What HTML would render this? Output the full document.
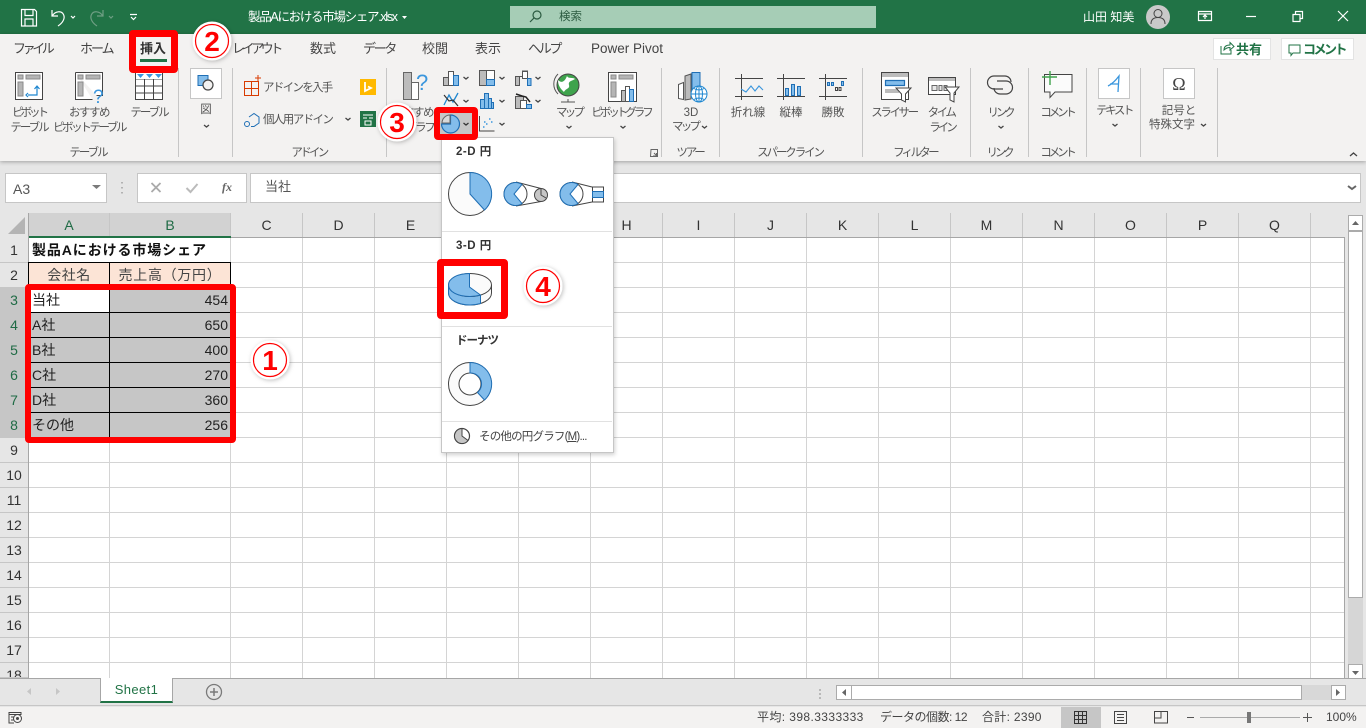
<!DOCTYPE html>
<html lang="ja"><head><meta charset="utf-8"><title>製品Aにおける市場シェア</title>
<style>
html,body{margin:0;padding:0;width:1366px;height:728px;overflow:hidden;background:#e6e6e6}
body{position:relative;font-family:"Liberation Sans","Noto Sans CJK JP",sans-serif;font-size:12px;color:#444}
div,span.t{position:absolute;box-sizing:border-box}
.t{position:absolute;white-space:nowrap;line-height:16px;height:16px;margin-top:-8px;color:#444}
.c{transform:translateX(-50%)}
.w{color:#fff}
.g{font-size:11.5px;color:#555;letter-spacing:-2.4px}
.k{letter-spacing:0}
.tab{font-size:13px}
.sep{width:1px;background:#c6c6c6;top:68px;height:89px}
.b{background:#fff;border:1px solid #c6c6c6}
.rh{left:0;width:28px;text-align:center;font-size:14px;line-height:25px;height:25px;color:#333;border-bottom:1px solid #c6c6c6;background:#e6e6e6}
.rs{background:#c6c6c6;color:#1f6b45}
.ch{top:213px;height:24px;text-align:center;font-size:14px;line-height:24px;color:#333;border-right:1px solid #c6c6c6}
.cell{height:25px;line-height:24px;font-size:14px;color:#222;white-space:nowrap;border-right:1px solid #000;border-bottom:1px solid #000;overflow:hidden}
.red{border:6px solid #f00;border-radius:4px;background:transparent}
svg{position:absolute;overflow:visible}
</style></head><body>

<!-- title bar -->
<div style="left:0;top:0;width:1366px;height:34px;background:#217346"></div>
<div style="left:510px;top:6px;width:366px;height:22px;background:#a6cdb6"></div>
<span class="t" style="left:559px;top:17px;color:#2b5a40;font-size:11.5px">検索</span>
<span class="t w" style="left:248px;top:17px;font-size:12.500px;letter-spacing:-1.300px">製品Aにおける市場シェア.xlsx</span>
<span class="t w" style="left:1083px;top:17px;font-size:12px">山田 知美</span>

<!-- ribbon -->
<div style="left:0;top:34px;width:1366px;height:127px;background:#f3f2f1;box-shadow:0 1px 4px rgba(0,0,0,.3)"></div>
<span class="t tab" style="left:13px;top:49px;letter-spacing:-3.400px">ファイル</span>
<span class="t tab" style="left:80px;top:49px;letter-spacing:-2px">ホーム</span>
<span class="t tab" style="left:140px;top:49px;font-weight:bold;color:#333">挿入</span>
<span class="t tab" style="left:232px;top:49px;letter-spacing:-3.400px">レイアウト</span>
<span class="t tab" style="left:310px;top:49px">数式</span>
<span class="t tab" style="left:363px;top:49px;letter-spacing:-2.300px">データ</span>
<span class="t tab" style="left:422px;top:49px">校閲</span>
<span class="t tab" style="left:475px;top:49px">表示</span>
<span class="t tab" style="left:528px;top:49px;letter-spacing:-2.300px">ヘルプ</span>
<span class="t" style="left:591px;top:49px;font-size:13.500px">Power Pivot</span>
<div style="left:140px;top:59px;width:27px;height:3px;background:#217346"></div>

<div class="b" style="left:1213px;top:38px;width:58px;height:22px;border-color:#e3e3e3"></div>
<span class="t" style="left:1236px;top:50px;font-size:13px;font-weight:bold;color:#217346">共有</span>
<div class="b" style="left:1281px;top:38px;width:73px;height:22px;border-color:#e3e3e3"></div>
<span class="t" style="left:1303px;top:50px;font-size:13px;letter-spacing:-2.500px;font-weight:bold;color:#217346">コメント</span>

<div class="sep" style="left:178px"></div><div class="sep" style="left:232px"></div><div class="sep" style="left:386px"></div>
<div class="sep" style="left:661px"></div><div class="sep" style="left:719px"></div><div class="sep" style="left:862px"></div>
<div class="sep" style="left:970px"></div><div class="sep" style="left:1028px"></div><div class="sep" style="left:1086px"></div>
<div class="sep" style="left:1140px"></div><div class="sep" style="left:1217px"></div>

<div class="b" style="left:190px;top:68px;width:32px;height:31px"></div>
<div class="b" style="left:1098px;top:68px;width:32px;height:31px"></div>
<div class="b" style="left:1163px;top:68px;width:32px;height:31px"></div>

<span class="t c g" style="left:29px;top:113px;letter-spacing:-3px">ピボット</span>
<span class="t c g" style="left:29px;top:128px;letter-spacing:-2px">テーブル</span>
<span class="t c g" style="left:89px;top:113px;letter-spacing:-1.500px">おすすめ</span>
<span class="t c g" style="left:89px;top:128px">ピボットテーブル</span>
<span class="t c g" style="left:149px;top:113px;letter-spacing:-2px">テーブル</span>
<span class="t c g" style="left:88px;top:153px;letter-spacing:-2px">テーブル</span>
<span class="t c g k" style="left:206px;top:110px">図</span>
<span class="t g" style="left:263px;top:88px;letter-spacing:-1.700px">アドインを入手</span>
<span class="t g" style="left:263px;top:120px;letter-spacing:-1.600px">個人用アドイン</span>
<span class="t c g" style="left:309px;top:153px;letter-spacing:-2.700px">アドイン</span>
<span class="t g" style="left:393px;top:113px;letter-spacing:-1.500px">おすすめ</span>
<span class="t g" style="left:406px;top:128px">グラフ</span>
<span class="t c g" style="left:569px;top:113px;letter-spacing:-2.800px">マップ</span>
<span class="t c g" style="left:621px;top:113px;letter-spacing:-3px">ピボットグラフ</span>
<span class="t c g k" style="left:691px;top:113px">3D</span>
<span class="t g" style="left:672px;top:127px;letter-spacing:-2.800px">マップ</span>
<span class="t c g" style="left:690px;top:153px;letter-spacing:-2.200px">ツアー</span>
<span class="t c g k" style="left:748px;top:113px">折れ線</span>
<span class="t c g k" style="left:791px;top:113px">縦棒</span>
<span class="t c g k" style="left:833px;top:113px">勝敗</span>
<span class="t c g" style="left:790px;top:153px;letter-spacing:-2.100px">スパークライン</span>
<span class="t c g" style="left:894px;top:113px">スライサー</span>
<span class="t c g" style="left:941px;top:113px;letter-spacing:-2.500px">タイム</span>
<span class="t c g" style="left:942px;top:128px;letter-spacing:-3px">ライン</span>
<span class="t c g" style="left:915px;top:153px;letter-spacing:-2.700px">フィルター</span>
<span class="t c g" style="left:1000px;top:113px;letter-spacing:-3.200px">リンク</span>
<span class="t c g" style="left:999px;top:153px;letter-spacing:-3.200px">リンク</span>
<span class="t c g" style="left:1057px;top:113px;letter-spacing:-3.200px">コメント</span>
<span class="t c g" style="left:1057px;top:153px;letter-spacing:-3.200px">コメント</span>
<span class="t c g" style="left:1114px;top:111px;letter-spacing:-2.500px">テキスト</span>
<span class="t c g k" style="left:1179px;top:111px">記号と</span>
<span class="t g k" style="left:1149px;top:125px">特殊文字</span>

<!-- formula bar -->
<div class="b" style="left:5px;top:173px;width:102px;height:30px"></div>
<span class="t" style="left:13px;top:189px;font-size:14px;color:#555">A3</span>
<div class="b" style="left:137px;top:173px;width:110px;height:30px"></div>
<div class="b" style="left:250px;top:173px;width:1111px;height:30px"></div>
<span class="t" style="left:265px;top:187px;font-size:13px;color:#555">当社</span>

<!-- grid -->
<div style="left:29px;top:238px;width:1316px;height:440px;background-color:#fff;background-image:linear-gradient(to bottom,transparent 24px,#d4d4d4 24px);background-size:100% 25px"></div>
<div style="left:230px;top:238px;width:1114px;height:440px;background-image:linear-gradient(to right,#d4d4d4 1px,transparent 1px);background-size:72px 100%"></div>
<div style="left:109px;top:438px;width:1px;height:240px;background:#d4d4d4"></div>
<div style="left:28px;top:213px;width:1px;height:465px;background:#a6a6a6"></div>
<div style="left:1344px;top:237px;width:1px;height:441px;background:#a6a6a6"></div>
<div style="left:29px;top:237px;width:1316px;height:1px;background:#a6a6a6"></div>

<!-- headers -->
<div style="left:0;top:213px;width:28px;height:25px;background:#e6e6e6"></div>
<div class="ch" style="left:29px;width:81px;background:#d2d2d2;color:#1f6b45">A</div>
<div class="ch" style="left:110px;width:121px;background:#d2d2d2;color:#1f6b45">B</div>
<div style="left:29px;top:236px;width:202px;height:2px;background:#217346"></div>
<div class="ch" style="left:231px;width:72px">C</div><div class="ch" style="left:303px;width:72px">D</div>
<div class="ch" style="left:375px;width:72px">E</div><div class="ch" style="left:447px;width:72px">F</div>
<div class="ch" style="left:519px;width:72px">G</div><div class="ch" style="left:591px;width:72px">H</div>
<div class="ch" style="left:663px;width:72px">I</div><div class="ch" style="left:735px;width:72px">J</div>
<div class="ch" style="left:807px;width:72px">K</div><div class="ch" style="left:879px;width:72px">L</div>
<div class="ch" style="left:951px;width:72px">M</div><div class="ch" style="left:1023px;width:72px">N</div>
<div class="ch" style="left:1095px;width:72px">O</div><div class="ch" style="left:1167px;width:72px">P</div>
<div class="ch" style="left:1239px;width:72px">Q</div>

<div class="rh" style="top:238px">1</div><div class="rh" style="top:263px">2</div>
<div class="rh rs" style="top:288px">3</div><div class="rh rs" style="top:313px">4</div>
<div class="rh rs" style="top:338px">5</div><div class="rh rs" style="top:363px">6</div>
<div class="rh rs" style="top:388px">7</div><div class="rh rs" style="top:413px">8</div>
<div class="rh" style="top:438px">9</div><div class="rh" style="top:463px">10</div>
<div class="rh" style="top:488px">11</div><div class="rh" style="top:513px">12</div>
<div class="rh" style="top:538px">13</div><div class="rh" style="top:563px">14</div>
<div class="rh" style="top:588px">15</div><div class="rh" style="top:613px">16</div>
<div class="rh" style="top:638px">17</div><div class="rh" style="top:663px;height:15px;line-height:25px;overflow:hidden">18</div>

<!-- cells -->
<div style="left:29px;top:238px;width:201px;height:24px;padding-left:3px;background:#fff;line-height:24px;font-size:14px;font-weight:bold;color:#111;white-space:nowrap;letter-spacing:.9px">製品Aにおける市場シェア</div>
<div class="cell" style="left:28px;top:262px;width:82px;height:26px;background:#fce4d6;text-align:center;border-top:1px solid #000;border-left:1px solid #000;color:#444;letter-spacing:.5px">会社名</div>
<div class="cell" style="left:110px;top:262px;width:121px;height:26px;background:#fce4d6;text-align:center;border-top:1px solid #000;color:#444;letter-spacing:.7px">売上高（万円）</div>
<div class="cell" style="left:29px;top:288px;width:81px;background:#fff;padding-left:3px">当社</div>
<div class="cell" style="left:110px;top:288px;width:121px;background:#c6c6c6;text-align:right;padding-right:2px">454</div>
<div class="cell" style="left:29px;top:313px;width:81px;background:#c6c6c6;padding-left:3px">A社</div>
<div class="cell" style="left:110px;top:313px;width:121px;background:#c6c6c6;text-align:right;padding-right:2px">650</div>
<div class="cell" style="left:29px;top:338px;width:81px;background:#c6c6c6;padding-left:3px">B社</div>
<div class="cell" style="left:110px;top:338px;width:121px;background:#c6c6c6;text-align:right;padding-right:2px">400</div>
<div class="cell" style="left:29px;top:363px;width:81px;background:#c6c6c6;padding-left:3px">C社</div>
<div class="cell" style="left:110px;top:363px;width:121px;background:#c6c6c6;text-align:right;padding-right:2px">270</div>
<div class="cell" style="left:29px;top:388px;width:81px;background:#c6c6c6;padding-left:3px">D社</div>
<div class="cell" style="left:110px;top:388px;width:121px;background:#c6c6c6;text-align:right;padding-right:2px">360</div>
<div class="cell" style="left:29px;top:413px;width:81px;background:#c6c6c6;padding-left:3px">その他</div>
<div class="cell" style="left:110px;top:413px;width:121px;background:#c6c6c6;text-align:right;padding-right:2px">256</div>

<!-- vertical scrollbar -->
<div style="left:1348px;top:231px;width:15px;height:433px;background:#d6d6d6"></div>
<div class="b" style="left:1348px;top:215px;width:15px;height:16px;border-color:#ababab"></div>
<div class="b" style="left:1348px;top:231px;width:15px;height:367px;border-color:#ababab"></div>
<div class="b" style="left:1348px;top:664px;width:15px;height:15px;border-color:#ababab"></div>

<!-- tab bar -->
<div style="left:0;top:678px;width:1366px;height:28px;background:#e6e6e6;border-top:1px solid #a6a6a6;border-bottom:1px solid #c6c6c6"></div>
<div style="left:100px;top:678px;width:73px;height:25px;background:#fff;border-left:1px solid #a6a6a6;border-right:1px solid #a6a6a6;border-bottom:2px solid #217346;text-align:center;line-height:23px;font-size:13px;letter-spacing:.4px;color:#217346">Sheet1</div>
<div style="left:851px;top:685px;width:480px;height:15px;background:#d8d8d8"></div>
<div class="b" style="left:836px;top:685px;width:16px;height:15px;border-color:#ababab"></div>
<div class="b" style="left:851px;top:685px;width:451px;height:15px;border-color:#ababab"></div>
<div class="b" style="left:1331px;top:685px;width:15px;height:15px;border-color:#ababab"></div>

<!-- status bar -->
<div style="left:0;top:707px;width:1366px;height:21px;background:#f3f2f1"></div>
<div style="left:1061px;top:707px;width:40px;height:21px;background:#c6c6c6"></div>
<span class="t" style="left:757px;top:717px;letter-spacing:.4px">平均: 398.3333333</span>
<span class="t" style="left:880px;top:717px;letter-spacing:-.5px">データの個数: 12</span>
<span class="t" style="left:982px;top:717px;letter-spacing:.3px">合計: 2390</span>
<span class="t" style="left:1326px;top:717px">100%</span>

<!-- icons -->
<svg style="left:0;top:0" width="1366" height="728" viewBox="0 0 1366 728" fill="none">
 <!-- title bar -->
 <g stroke="#fff" stroke-width="1.2">
  <path d="M21.5 9.5h13l2 2v14.500h-15zM25 9.5v6h8v-6M25 26v-7h8v7"/>
  <path d="M52 10v6h6M52.500 15.500c3-4.500 9-5 11-1s-1 8.500-5.500 11.500"/>
  <path d="M71 16l2 2 2-2M131 17l2.500 2.500 2.500-2.500M130 14.500h7"/>
  <path d="M1198.500 11.500h13v9h-13zM1198.500 14h13M1205 19v-4M1203 17l2-2 2 2"/>
  <path d="M1246 16.500h10"/>
  <path d="M1293 14.500h7v7h-7zM1295.500 14v-2.500h7v7h-2.500"/>
  <path d="M1338 11l10 10M1348 11l-10 10"/>
  <path d="M402 16l5 0-2.500 3z" fill="#fff" stroke="none"/>
 </g>
 <g stroke="#6f9f84" stroke-width="1.2">
  <path d="M103 10v6h-6M102.500 15.500c-3-4.500-9-5-11-1s1 8.500 5.500 11.500M109 16l2 2 2-2"/>
 </g>
 <circle cx="537" cy="15" r="4" stroke="#2b5a40" stroke-width="1.2"/><path d="M534 18l-4 4" stroke="#2b5a40" stroke-width="1.2"/>
 <circle cx="1158" cy="17" r="12" fill="#c9c9c9"/>
 <circle cx="1158" cy="13.500" r="4" stroke="#444"/><path d="M1151 24c0-5 3-6.500 7-6.500s7 1.500 7 6.500" stroke="#444"/>

 <!-- share/comment -->
 <path d="M1221 46v8h10v-4M1224 50c0-4 3-5 6-5v-2.500l4 4-4 3.500v-2.500c-2 0-4 .5-6 2.500z" stroke="#217346"/>
 <path d="M1289 45h11v8h-7l-2 2.500v-2.500h-2z" stroke="#217346"/>

 <!-- pivot -->
 <path d="M15.500 72.500h27v27h-27z" fill="#fff" stroke="#444"/>
 <path d="M18 75h5v4h-5zM26 75h14v4h-14zM18 82h5v14h-5z" fill="#b5b5b5" stroke="#8a8a8a"/>
 <path d="M28 95h9v-8M34.500 89l2.500-3 2.500 3M28 93l-2 2 2 2" stroke="#1f87d0" stroke-width="1.2"/>
 <!-- recommended pivot -->
 <path d="M75.500 72.500h27v23h-6M75.500 72.500v27h17" fill="#fff" stroke="#444"/>
 <path d="M78 75h5v4h-5zM86 75h14v4h-14zM78 82h5v14h-5z" fill="#b5b5b5" stroke="#8a8a8a"/>
 <text x="93" y="103" font-family="Liberation Sans,sans-serif" font-size="19" fill="#3a96dd">?</text>
 <!-- table -->
 <path d="M135.500 72.500h27v27h-27zM135.500 79h27M135.500 86h27M135.500 93h27M144.500 72.500v27M153.500 72.500v27" fill="#fff" stroke="#444"/>
 <path d="M136 73h26v6h-26z" fill="#fff"/>
 <path d="M137 74h7l-3.500 4zM146 74h7l-3.500 4zM155 74h7l-3.500 4z" fill="#3a96dd"/>
 <!-- pictures -->
 <path d="M198 75.500h10v10h-10z" fill="#83bdeb" stroke="#1f6fb5"/>
 <circle cx="208" cy="85" r="5" fill="#f3f2f1" stroke="#444" stroke-width="1.200"/>
 <!-- chevrons -->
 <g stroke="#444" stroke-width="1.300">
  <path d="M204 125l2.500 2 2.500-2M345.500 118l2.500 2 2.500-2M463.500 77l2.500 2 2.500-2M499.500 77l2.500 2 2.500-2M535.500 77l2.500 2 2.500-2M463.500 100l2.500 2 2.500-2M499.500 100l2.500 2 2.500-2M535.500 100l2.500 2 2.500-2M499.500 123l2.500 2 2.500-2M566.500 126l2.500 2 2.500-2M620.500 126l2.500 2 2.500-2M702 126l2.500 2 2.500-2M998.500 126l2.500 2 2.500-2M1112.500 124l2.500 2 2.500-2M1201 124l2.500 2 2.500-2M1350 156l3.500-3 3.500 3"/>
 </g>
 <!-- add-ins -->
 <path d="M244.500 81.500h14v14h-14zM251.500 81.500v14M244.500 88.500h14" stroke="#d83b01"/>
 <path d="M255 78h6M258 75v6" stroke="#d83b01"/>
 <path d="M360 79h16v16h-16z" fill="#ffb900"/><path d="M365 82v9l6-3-3-1.500" stroke="#fff" stroke-width="1.800"/>
 <path d="M249 117l5-3.500 5 3.500v6l-5 3.500h-3" stroke="#1f6fb5"/><circle cx="247" cy="124" r="2.500" stroke="#1f6fb5"/>
 <path d="M360 111h16v16h-16z" fill="#217346"/><path d="M363 115h10M363 118h4M369 118h4M365 125h6v-4h-6z" stroke="#fff"/>
 <!-- recommended chart -->
 <path d="M403.500 72.500h8v27h-8z" fill="#bcbcbc" stroke="#666"/><path d="M411.500 82.500h7v17h-7z" fill="#fff" stroke="#666"/>
 <text x="416" y="90" font-family="Liberation Sans,sans-serif" font-size="22" fill="#3a96dd">?</text>
 <!-- small charts -->
 <path d="M443.500 77.500h5v8h-5z" fill="#bcbcbc" stroke="#555"/><path d="M448.500 71.500h5v14h-5z" fill="#fff" stroke="#555"/><path d="M453.500 75.500h5v10h-5z" fill="#83bdeb" stroke="#1f6fb5"/>
 <path d="M479.500 70.500h15v15h-15z" fill="#fff" stroke="#555"/><path d="M479.500 70.500h7v15h-7z" fill="#bcbcbc" stroke="#555"/><path d="M486.500 79.500h8v6h-8z" fill="#83bdeb" stroke="#1f6fb5"/>
 <path d="M515.500 85.500h4v-9h-4zM519.500 76.500h3v-5.500h5v7" fill="#bcbcbc" stroke="#555"/><path d="M522.500 71.500h5v7h-5z" fill="#fff" stroke="#555"/><path d="M527.500 78.500h3.500v7h-3.500z" fill="#83bdeb" stroke="#1f6fb5"/>
 <path d="M444 105l5-10 4 7 5-9" stroke="#1f87d0" stroke-width="1.300"/><path d="M444 95l5 6 4-1 5 6" stroke="#333" stroke-width="1.200"/>
 <path d="M480.500 108.500v-9h4v9zM484.500 108.500v-15h4v15zM488.500 108.500v-10h3v10zM491.500 108.500v-6h2v6z" fill="#83bdeb" stroke="#1f6fb5"/>
 <path d="M515.500 96.500h8v12h-8z" fill="#bcbcbc" stroke="#555"/><path d="M520.500 100.500h6v8h-6z" fill="#fff" stroke="#555"/><path d="M526.500 104.500h5v4h-5z" fill="#83bdeb" stroke="#1f6fb5"/>
 <path d="M516 94l6 2 4 1 4 5" stroke="#222" stroke-width="1.500"/>
 <path d="M479.500 116v15h15" stroke="#444"/><path d="M483 127h1.500M486 124h1.500M489 119h1.500M491 122h1.500M484 122h1.500" stroke="#3a96dd" stroke-width="1.500"/>
 <!-- map -->
 <circle cx="568" cy="85" r="11" fill="#3fa34d" stroke="#444"/><path d="M558 80c4 4 7 1 9-4 1 3 6 1 8 3-3 2-7 2-6 6s-3 3-5 7c-3-3-6-6-6-12z" fill="#fff"/>
 <path d="M558 74a14 14 0 0 0 0 20M568 99v3M561 102h14" stroke="#555"/>
 <!-- pivot chart -->
 <path d="M608.500 72.500h28v29h-28z" fill="#fff" stroke="#444"/>
 <path d="M611 75h5v4h-5zM619 75h14v4h-14zM611 82h5v15h-5z" fill="#b5b5b5" stroke="#8a8a8a"/>
 <path d="M621.500 90.500h4v11h-4z" fill="#bcbcbc" stroke="#555"/><path d="M625.500 86.500h4v15h-4z" fill="#fff" stroke="#555"/><path d="M629.500 89.500h4v12h-4z" fill="#83bdeb" stroke="#1f6fb5"/>
 <path d="M651 149.500h6.500v7h-7zM654 153l3 3M656 156h-3M656.500 156v-3" stroke="#666"/>
 <!-- 3d map -->
 <path d="M678.500 84.500l5-2v17l-5-1z" fill="#fff" stroke="#555"/><path d="M685 76l6-2v25l-6 1z" fill="#bcbcbc" stroke="#555"/>
 <path d="M692 72.500h8v18h-8z" fill="#83bdeb" stroke="#1f6fb5"/>
 <circle cx="699" cy="94" r="8" fill="#fff" stroke="#1f87d0"/><path d="M691 94h16M699 86v16M694 88.500c3 2 7 2 10 0M694 99.500c3-2 7-2 10 0" stroke="#1f87d0"/><ellipse cx="699" cy="94" rx="3.500" ry="8" stroke="#1f87d0"/>
 <!-- sparklines -->
 <g stroke="#444"><path d="M735 78.500h28M735 96.500h28M741.500 74v26M777 78.500h28M777 96.500h28M783.500 74v26M819 78.500h28M819 96.500h28M825.500 74v26"/></g>
 <path d="M741 89l5 3 5-6 4 5 4-5 4 4" stroke="#3a96dd" stroke-width="1.100"/>
 <path d="M785.500 88.500h3v7h-3zM791.500 84.500h3v11h-3zM797.500 86.500h3v9h-3z" fill="#83bdeb" stroke="#1f6fb5"/>
 <path d="M827.500 82.500h2v3h-2zM831.500 82.500h2v3h-2zM841.500 81.500h2v4h-2z" fill="#83bdeb" stroke="#1f6fb5"/><path d="M835.500 87.500h2v3h-2zM839 87.500h2v3h-2z" stroke="#444"/>
 <!-- slicer -->
 <path d="M881.500 72.500h27v27h-27z" fill="#fff" stroke="#444"/><path d="M882 73h26v4h-26z" fill="#bcbcbc"/>
 <path d="M885.500 80.500h19v5h-19z" fill="#83bdeb" stroke="#1f6fb5" stroke-width="1.200"/><path d="M885 89h14v4h-14z" fill="#bcbcbc"/>
 <path d="M896 88h15l-5.500 6v8l-4-2v-6z" fill="#fff" stroke="#444"/>
 <!-- timeline -->
 <path d="M928.500 77.500h27v17h-27z" fill="#fff" stroke="#444"/><path d="M929 78h26v3h-26z" fill="#bcbcbc"/>
 <path d="M932 85.500h5v5h-5zM939 85.500h3v5h-3zM944 85.500h3v5h-3z" fill="#e8e8e8" stroke="#666"/>
 <path d="M945 87h14l-5 6v9l-4-2v-7z" fill="#fff" stroke="#444"/>
 <!-- link -->
 <g stroke="#444" stroke-width="1.200"><path d="M1003 89h-9a6.500 6.500 0 0 1 0-13h11c3 0 6 2.500 6 6"/><path d="M997 81h9a6.500 6.500 0 0 1 0 13h-6c-3 0-6-2.500-6-6"/></g>
 <!-- comment -->
 <path d="M1044.500 74.500h27.500v17.500h-17l-5 5.500v-5.500h-5.500z" fill="#fbfbfb" stroke="#444"/>
 <path d="M1042 77h15M1050 71v14" stroke="#3fa34d" stroke-width="1.400"/>
 <!-- text, omega -->
 <path d="M1108 86c4-2 8-6 11-10l-1 16M1110 84c3 0 6 0 8 0" stroke="#3a96dd" stroke-width="1.300"/>
 <text x="1179" y="90" text-anchor="middle" font-family="Liberation Serif,serif" font-size="18" fill="#444">Ω</text>

 <!-- formula bar -->
 <path d="M92 185h9l-4.500 4z" fill="#7a7a7a"/>
 <path d="M122 182v1.500M122 187v1.500M122 192v1.500" stroke="#a0a0a0" stroke-width="1.500"/>
 <path d="M151.500 183l9 9M160.500 183l-9 9" stroke="#aaa" stroke-width="1.800"/>
 <path d="M186.500 188l4 4 7-8" stroke="#bbb" stroke-width="2"/>
 <text x="222" y="191" font-family="Liberation Serif,serif" font-style="italic" font-weight="bold" font-size="12" fill="#666">fx</text>
 <path d="M1348 186l4 3 4-3" stroke="#666" stroke-width="2"/>

 <!-- corner & scroll arrows -->
 <path d="M25 217v17h-17z" fill="#b4b4b4"/>
 <path d="M1352 225l3.500-4 3.500 4z" fill="#666"/><path d="M1352 671l3.500 4 3.500-4z" fill="#666"/>
 <path d="M846 689v7l-4-3.500zM1336 689v7l4-3.500z" fill="#666"/>
 <path d="M31 688v7l-4-3.500z" fill="#c6c6c6"/><path d="M56 688v7l4-3.500z" fill="#c6c6c6"/>
 <circle cx="214" cy="692" r="7.500" stroke="#7a7a7a" stroke-width="1.300"/><path d="M210 692h8M214 688v8" stroke="#7a7a7a" stroke-width="1.500"/>
 <path d="M820 689v2M820 693v2M820 697v2" stroke="#aaa" stroke-width="1.500"/>

 <!-- status icons -->
 <path d="M9 712.500h12v2h-12zM9 714v9h5M11 717h4M11 720h3" stroke="#444"/><circle cx="17.500" cy="718.500" r="4" fill="#f3f2f1" stroke="#444"/><circle cx="17.500" cy="718.500" r="1.500" fill="#444"/>
 <path d="M1074.500 711.500h12v12h-12zM1078.500 711.500v12M1082.500 711.500v12M1074.500 715.500h12M1074.500 719.500h12" stroke="#333"/>
 <path d="M1114.500 711.500h12v12h-12zM1117 714.500h7M1117 717.500h7M1117 720.500h7" stroke="#444"/>
 <path d="M1154.500 711v12h13v-12M1154.500 711.500h13M1161 711v7h-6.500" stroke="#444"/>
 <path d="M1187 717.500h7M1303 717.500h9M1307.500 713v9" stroke="#555"/>
 <path d="M1200 717.500h100" stroke="#aaa"/><path d="M1247 712h4v11h-4z" fill="#777"/>
</svg>

<!-- dropdown -->
<div style="left:441px;top:137px;width:173px;height:316px;background:#fff;border:1px solid #c6c6c6;box-shadow:1px 2px 4px rgba(0,0,0,.18)"></div>
<div style="left:442px;top:231px;width:170px;height:1px;background:#e1e1e1"></div>
<div style="left:442px;top:326px;width:170px;height:1px;background:#e1e1e1"></div>
<div style="left:442px;top:421px;width:170px;height:1px;background:#e1e1e1"></div>
<span class="t" style="left:456px;top:152px;font-weight:bold;font-size:11.500px;color:#333;letter-spacing:.5px">2-D 円</span>
<span class="t" style="left:456px;top:246px;font-weight:bold;font-size:11.500px;color:#333;letter-spacing:.5px">3-D 円</span>
<span class="t" style="left:456px;top:341px;font-weight:bold;font-size:11.500px;color:#333;letter-spacing:-1px">ドーナツ</span>
<span class="t" style="left:479px;top:437px;font-size:11.500px;letter-spacing:-.8px">その他の円グラフ(<u>M</u>)...</span>

<!-- selected chart button -->
<div style="left:440px;top:113px;width:32px;height:21px;background:#c6c6c6"></div>

<svg style="left:0;top:0" width="1366" height="728" viewBox="0 0 1366 728" fill="none">
 <!-- pie button -->
 <path d="M450.500 115a9 9 0 0 1 0 18a9 9 0 0 1-9-9h9z" fill="#83bdeb" stroke="#1f6fb5" stroke-width="1.200"/>
 <path d="M442 123a8 8 0 0 1 8-8v8z" fill="#d8d8d8" stroke="#666"/>
 <path d="M463.500 123l2.500 2 2.500-2" stroke="#333" stroke-width="1.300"/>
 <!-- 2-D pie -->
 <circle cx="470" cy="194" r="21.500" fill="#fbfbfb" stroke="#444"/>
 <path d="M470 172.500a21.500 21.500 0 0 1 14.500 37.500l-14.500-16z" fill="#83bdeb" stroke="#1f6fb5"/>
 <!-- pie of pie -->
 <path d="M516 182l25 6.500M516 206l25-4.500" stroke="#444"/>
 <circle cx="515.500" cy="194" r="11.500" fill="#fff" stroke="#444"/>
 <path d="M522 184.500a11.500 11.500 0 1 0 0 19l-8-9.500z" fill="#83bdeb" stroke="#1f6fb5"/>
 <circle cx="541" cy="195" r="6.500" fill="#c6c6c6" stroke="#444"/><path d="M541 188.500v6.500l5 3" stroke="#444"/>
 <!-- bar of pie -->
 <path d="M572 182l20 5M572 206l20-4" stroke="#444"/>
 <circle cx="571.500" cy="194" r="11.500" fill="#fff" stroke="#444"/>
 <path d="M578 184.500a11.500 11.500 0 1 0 0 19l-8-9.500z" fill="#83bdeb" stroke="#1f6fb5"/>
 <path d="M592.500 187h11v15h-11z" fill="#fff" stroke="#444"/><path d="M592.500 191.500h11v6h-11z" fill="#83bdeb" stroke="#1f6fb5"/>
 <!-- 3-D pie -->
 <path d="M448.500 285v8c0 7 10 12 21.500 12s21.500-5 21.500-12v-8" fill="#fbfbfb" stroke="#444"/>
 <path d="M448.500 285v8c0 7 10 12 21.500 12 4 0 7-.5 10.500-1.500v-8" fill="#83bdeb" stroke="#1f6fb5"/>
 <ellipse cx="470" cy="285" rx="21.500" ry="11.500" fill="#fbfbfb" stroke="#444"/>
 <path d="M469.500 273.500c-12 0-21 5-21 11.500s9 11.500 21.500 11.500c4 0 7-.5 10.500-1.500l-11-8z" fill="#83bdeb" stroke="#1f6fb5"/>
 <!-- doughnut -->
 <circle cx="470" cy="384" r="21.500" fill="#fbfbfb" stroke="#444"/>
 <circle cx="470" cy="384" r="11" fill="#fff" stroke="#444"/>
 <path d="M470 362.500a21.500 21.500 0 0 1 14.500 37.500l-7-7.500a11 11 0 0 0-7.500-19.500z" fill="#83bdeb" stroke="#1f6fb5"/>
 <!-- other pie -->
 <circle cx="462" cy="436" r="7.500" fill="#fff" stroke="#444" stroke-width="1.200"/>
 <path d="M462 428.500a7.500 7.500 0 1 0 6 12l-6-4.500z" fill="#c6c6c6" stroke="#444"/>
</svg>

<!-- red annotation -->
<div class="red" style="left:25px;top:284px;width:211px;height:159px"></div>
<div class="red" style="left:129px;top:30px;width:49px;height:43px;border-width:7px"></div>
<div class="red" style="left:434px;top:107px;width:44px;height:33px"></div>
<div class="red" style="left:437px;top:259px;width:71px;height:60px;border-width:7px"></div>

<!-- circled numbers -->
<svg style="left:0;top:0" width="1366" height="728" viewBox="0 0 1366 728" font-family="Liberation Sans,sans-serif" font-weight="bold" font-size="28" text-anchor="middle">
 <defs><filter id="s" x="-30%" y="-30%" width="160%" height="160%"><feDropShadow dx="1" dy="1" stdDeviation="2" flood-opacity=".25"/></filter></defs>
 <circle cx="270" cy="360" r="19.500" fill="#fff" filter="url(#s)"/><circle cx="270" cy="360" r="16.500" fill="#fff" stroke="#f00" stroke-width="1.200"/><text x="270" y="370" fill="#f00">1</text>
 <circle cx="212" cy="41" r="19.500" fill="#fff" filter="url(#s)"/><circle cx="212" cy="41" r="16.500" fill="#fff" stroke="#f00" stroke-width="1.200"/><text x="212" y="51" fill="#f00">2</text>
 <circle cx="397" cy="122" r="19.500" fill="#fff" filter="url(#s)"/><circle cx="397" cy="122" r="16.500" fill="#fff" stroke="#f00" stroke-width="1.200"/><text x="397" y="132" fill="#f00">3</text>
 <circle cx="543" cy="286" r="19.500" fill="#fff" filter="url(#s)"/><circle cx="543" cy="286" r="16.500" fill="#fff" stroke="#f00" stroke-width="1.200"/><text x="543" y="296" fill="#f00">4</text>
</svg>
</body></html>
